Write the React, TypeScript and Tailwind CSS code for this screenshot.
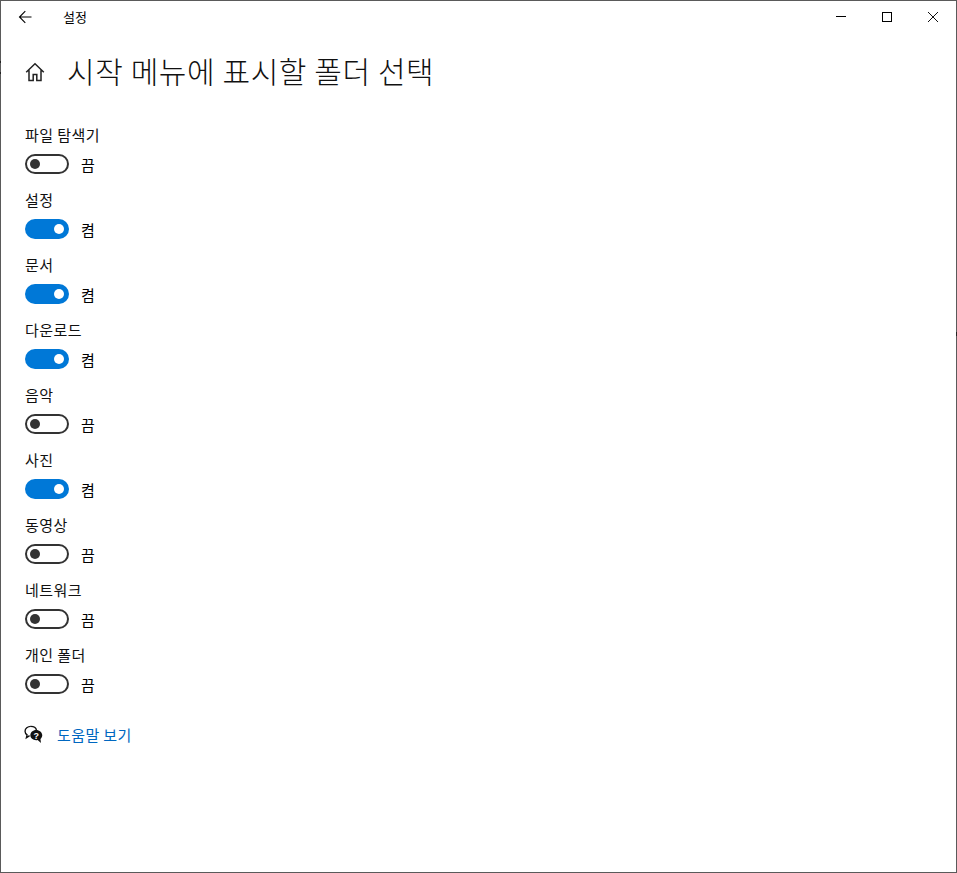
const rows: [string, boolean][] = [
  ["파일 탐색기", false],
  ["설정", true],
  ["문서", true],
  ["다운로드", true],
  ["음악", false],
  ["사진", true],
  ["동영상", false],
  ["네트워크", false],
  ["개인 폴더", false],
];

function Toggle({ on }: { on: boolean }) {
  return (
    <div
      className={
        on
          ? "flex h-5 w-11 items-center justify-end rounded-full bg-[#0078d7] px-[5px]"
          : "flex h-5 w-11 items-center justify-start rounded-full border-2 border-[#333333] px-[3px]"
      }
    >
      <div className={on ? "h-2.5 w-2.5 rounded-full bg-white" : "h-2.5 w-2.5 rounded-full bg-[#333333]"} />
    </div>
  );
}

export default function App() {
  return (
    <div className="relative flex h-[873px] w-[957px] flex-col border border-[#5a5a5a] bg-white font-['Noto_Sans_CJK_KR',sans-serif] text-black">
      <div className="absolute left-[-1px] top-[60px] h-[2px] w-px bg-[#222]" />
      <div className="absolute left-[-1px] top-[71px] h-[2px] w-px bg-[#222]" />
      <div className="absolute right-[-1px] top-[331px] h-[4px] w-px bg-[#222]" />

      <div className="flex h-[31px] shrink-0 items-center">
        <svg width="16" height="16" viewBox="0 0 16 16" className="ml-4" fill="none" stroke="#000" strokeWidth="1.1">
          <path d="M14.500 8H2.500M8.300 2.200 2.500 8l5.800 5.800" />
        </svg>
        <span className="ml-[30px] text-[13px] leading-4">설정</span>
        <div className="ml-auto flex items-center">
          <div className="flex h-[31px] w-[46px] items-center justify-center">
            <div className="h-px w-2.5 bg-black" />
          </div>
          <div className="flex h-[31px] w-[46px] items-center justify-center">
            <div className="h-2.5 w-2.5 border border-black" />
          </div>
          <div className="flex h-[31px] w-[46px] items-center justify-center">
            <svg width="12" height="12" viewBox="0 0 12 12" fill="none" stroke="#111" strokeWidth="1">
              <path d="M1 1l10 10M11 1 1 11" />
            </svg>
          </div>
        </div>
      </div>

      <div className="mt-[16px] flex h-[46px] shrink-0 items-center pl-[24px]">
        <svg width="20" height="20" viewBox="0 0 20 20" fill="none" stroke="#222" strokeWidth="1.5" className="mt-[2px]">
          <path d="M1.200 10.200 10 1.800l8.800 8.400M4 8.200V18.500h4.200v-6h3.600v6H16V8.200" />
        </svg>
        <h1 className="ml-[22px] pb-[2px] text-[30px] font-light leading-[44px] tracking-[0.6px] text-[#111]">시작 메뉴에 표시할 폴더 선택</h1>
      </div>

      <div className="mt-[30px] flex flex-col pl-[24px]">
        {rows.map(([name, on]) => (
          <div key={name} className="flex h-[65px] flex-col">
            <div className="flex h-[20px] items-center pt-[2px] text-[15px] leading-5 tracking-[0.45px] text-[#111]">{name}</div>
            <div className="mt-[10px] flex h-5 items-center">
              <Toggle on={on} />
              <span className="ml-3 pt-[2px] text-[15px] leading-5">{on ? "켬" : "끔"}</span>
            </div>
          </div>
        ))}
      </div>

      <div className="mt-[15px] flex h-5 items-center pl-[23px]">
        <svg width="19" height="19" viewBox="0 0 18 18">
          <path d="M6.500 1.300C3.500 1.300 1 3.300 1 6c0 1.400.7 2.600 1.900 3.400L2.300 12l3-1.900" fill="none" stroke="#111" strokeWidth="1.300" />
          <path d="M6.500 1.300c2.600 0 4.800 1.400 5.300 3.400" fill="none" stroke="#111" strokeWidth="1.300" />
          <path d="M11.500 4.800C8.500 4.800 6 7 6 9.700c0 2.600 2.500 4.700 5.500 4.700.5 0 1 0 1.400-.2l3.200 2.800-.5-3.800c1-.8 1.700-2.100 1.700-3.500 0-2.700-2.800-4.900-5.800-4.900z" fill="#111" />
          <text x="11.600" y="12.900" fontSize="8.500" fontWeight="700" textAnchor="middle" fill="#fff" fontFamily="Liberation Sans, sans-serif">?</text>
        </svg>
        <span className="ml-[14px] pt-[2px] text-[15px] leading-5 tracking-[0.4px] text-[#0067c0]">도움말 보기</span>
      </div>
    </div>
  );
}
